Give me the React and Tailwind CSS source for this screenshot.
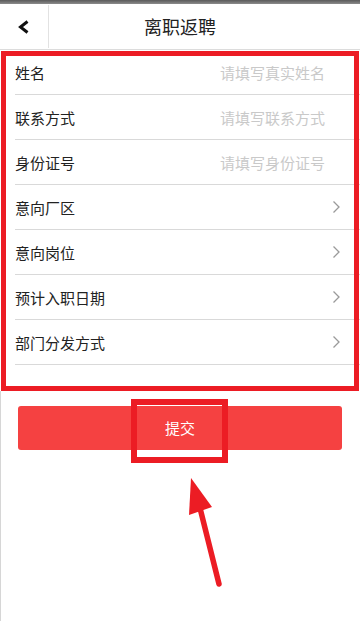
import React from "react";

const font = { fontFamily: '"Noto Sans CJK SC", "Noto Sans", sans-serif' };

const rows = [
  { label: "姓名", placeholder: "请填写真实姓名" },
  { label: "联系方式", placeholder: "请填写联系方式" },
  { label: "身份证号", placeholder: "请填写身份证号" },
  { label: "意向厂区" },
  { label: "意向岗位" },
  { label: "预计入职日期" },
  { label: "部门分发方式" },
];

function Chevron() {
  return (
    <svg width="9" height="14" viewBox="0 0 9 14" className="shrink-0">
      <polyline points="1.5,1.5 7,7 1.5,12.5" fill="none" stroke="#9a9a9a" strokeWidth="1.3" />
    </svg>
  );
}

export default function App() {
  return (
    <div className="relative w-[360px] h-[621px] bg-white overflow-hidden font-['Noto_Sans_CJK_SC',sans-serif]">
      <div className="h-[4px] bg-gradient-to-b from-[#5a5a5a] to-[#8c8c8c]" />
      <header className="h-[46px] flex items-stretch border-b border-[#dcdcdc]">
        <div className="w-[49px] shrink-0 flex items-center justify-center border-r border-[#e2e2e2] my-[1px]">
          <svg width="14" height="14" viewBox="0 0 14 14">
            <polyline points="10.5,1.5 3.5,7 10.5,12.5" fill="none" stroke="#111" strokeWidth="3" strokeLinejoin="miter" />
          </svg>
        </div>
        <div className="flex-1 flex items-center justify-center pr-[49px] text-[18px] text-[#222]">
          离职返聘
        </div>
      </header>

      <div className="flex flex-col">
        {rows.map((r) => (
          <div key={r.label} className="h-[45px] pl-[15px]">
            <div className="h-full flex items-center border-b border-[#d9d9d9]">
              <span className="text-[15px] text-[#222] leading-none">{r.label}</span>
              <div className="flex-1" />
              {r.placeholder ? (
                <span className="text-[15px] text-[#c9c9c9] leading-none pr-[35px]">{r.placeholder}</span>
              ) : (
                <div className="pr-[19px] flex items-center">
                  <Chevron />
                </div>
              )}
            </div>
          </div>
        ))}
      </div>

      <div className="mt-[41px] mx-[18px] h-[44px] rounded-[3px] bg-[#f54141] flex items-center justify-center text-white text-[15px]">
        提交
      </div>

      <div className="absolute left-0 top-[391px] bottom-0 w-[1px] bg-[#d6d6d6]" />

      {/* annotations */}
      <div className="absolute left-[1px] top-[51px] w-[358px] h-[340px] border-[5px] border-[#ec1c24]" />
      <div className="absolute left-[131px] top-[399px] w-[97px] h-[64px] border-[6px] border-[#ec1c24]" />
      <svg className="absolute left-0 top-0" width="360" height="621" viewBox="0 0 360 621">
        <line x1="200" y1="508" x2="219" y2="584" stroke="#ec1c24" strokeWidth="5.5" strokeLinecap="round" />
        <polygon points="191,478 189,515 212,507" fill="#ec1c24" />
      </svg>
    </div>
  );
}
